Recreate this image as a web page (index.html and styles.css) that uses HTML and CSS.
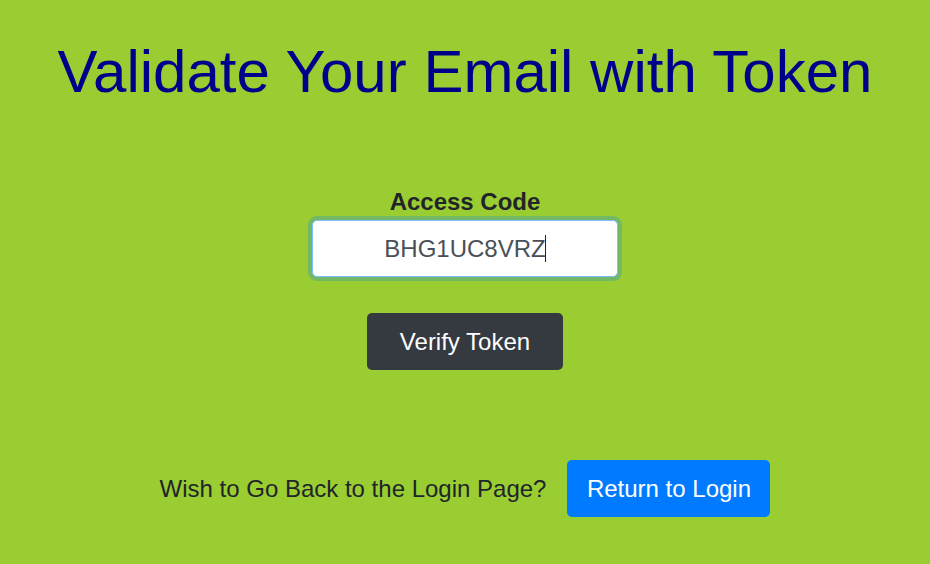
FILE: index.html
```html
<!DOCTYPE html>
<html lang="en">
<head>
<meta charset="utf-8">
<title>Validate Your Email with Token</title>
<link rel="stylesheet" href="styles.css">
</head>
<body>
<main class="page">
  <h1 class="title">Validate Your Email with Token</h1>
  <form class="token-form">
    <label class="field-label" for="code">Access Code</label>
    <div class="field-wrap">
      <input class="field" id="code" type="text" value="BHG1UC8VRZ">
      <span class="caret"></span>
    </div>
    <button type="button" class="btn btn-dark">Verify Token</button>
  </form>
  <div class="back-row">
    <span class="back-text">Wish to Go Back to the Login Page?</span>
    <button type="button" class="btn btn-blue">Return to Login</button>
  </div>
</main>
</body>
</html>
```

FILE: styles.css
```css
html, body {
  margin: 0;
  padding: 0;
  background: #9acd32;
  font-family: "Liberation Sans", Arial, sans-serif;
  color: #212529;
}

.page {
  display: flex;
  flex-direction: column;
  align-items: center;
  padding-top: 36px;
}

.title {
  margin: 0;
  font-size: 60px;
  font-weight: 400;
  line-height: 1.2;
  color: #00008b;
}

.token-form {
  display: flex;
  flex-direction: column;
  align-items: center;
  margin-top: 80px;
}

.field-label {
  font-size: 24px;
  font-weight: 700;
  line-height: 1.2;
  color: #212529;
}

.field-wrap {
  position: relative;
  margin-top: 3px;
}

.field {
  display: block;
  box-sizing: border-box;
  width: 306px;
  height: 57px;
  padding: 2px 12px 0;
  font-family: inherit;
  font-size: 24px;
  color: #495057;
  text-align: center;
  background: #fff;
  border: 1px solid #80bdff;
  border-radius: 5px;
  box-shadow: 0 0 0 4px rgba(0, 123, 255, 0.25);
  outline: none;
}

.caret {
  position: absolute;
  left: 233px;
  top: 15px;
  width: 1px;
  height: 27px;
  background: #222;
}

.btn {
  box-sizing: border-box;
  height: 57px;
  padding: 2px 0 0;
  border: none;
  border-radius: 5px;
  font-family: inherit;
  font-size: 24px;
  color: #fff;
  cursor: pointer;
}

.btn-dark {
  margin-top: 36px;
  width: 196px;
  background: #343a40;
}

.btn-blue {
  width: 203px;
  background: #007bff;
}

.back-row {
  display: flex;
  align-items: center;
  gap: 21px;
  margin-top: 90px;
}

.back-text {
  font-size: 24px;
  color: #212529;
  padding-top: 2px;
}
```
